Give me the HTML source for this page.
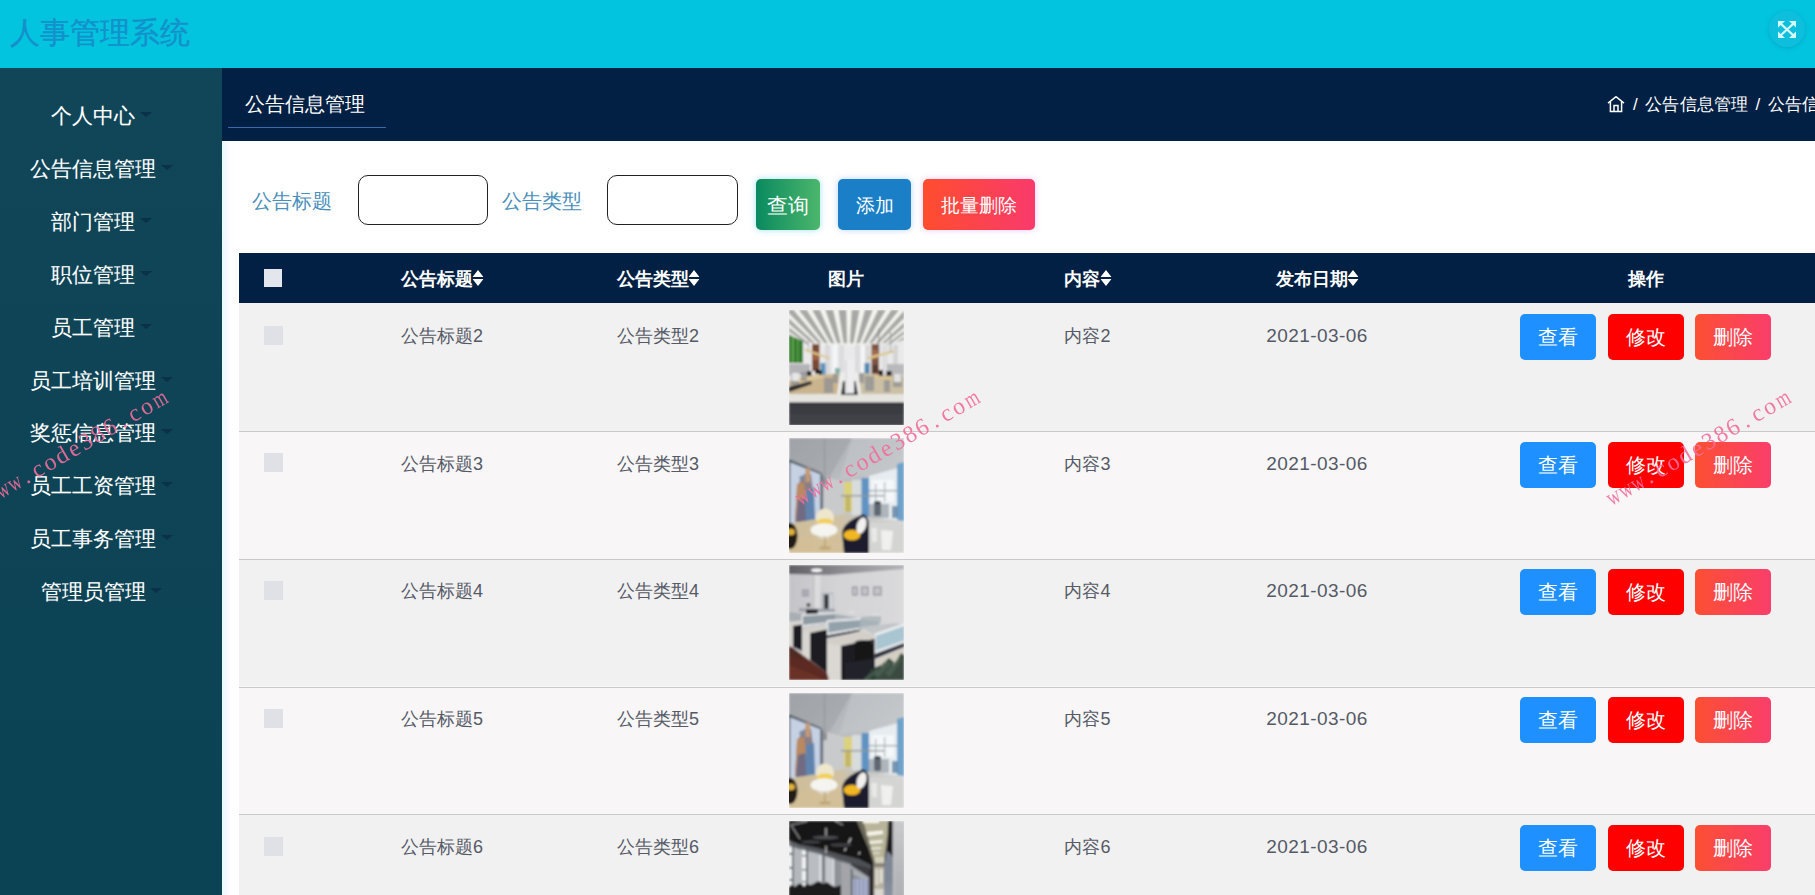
<!DOCTYPE html>
<html lang="zh">
<head>
<meta charset="utf-8">
<title>人事管理系统</title>
<style>
*{box-sizing:border-box;margin:0;padding:0}
html,body{width:1815px;height:895px;overflow:hidden;background:#fff;font-family:"Liberation Sans",sans-serif;}
#app{position:relative;width:1815px;height:895px;overflow:hidden}
.abs{position:absolute}
#top{left:0;top:0;width:1815px;height:68px;background:#03c4de}
#title{left:10px;top:10.5px;font-size:30px;line-height:44px;color:#1391cc;white-space:nowrap;-webkit-text-stroke:.35px #1391cc}
#fs{left:1769px;top:11px;width:36px;height:36px;border-radius:50%;background:#0dbfdd;box-shadow:0 1px 4px rgba(0,120,160,.35)}
#side{left:0;top:68px;width:222px;height:827px;background:linear-gradient(180deg,#104657 0%,#0e4456 40%,#0c4354 100%)}
.mi{left:0;width:186px;padding-left:17px;text-align:center;font-size:20.8px;line-height:30px;height:30px;color:#fff;white-space:nowrap;text-shadow:0 0 1px rgba(255,255,255,.25)}
.mi i{display:inline-block;width:0;height:0;border-left:6px solid transparent;border-right:6px solid transparent;border-top:5.5px solid #0b3049;margin-left:4.5px;vertical-align:6px}
#nav{left:222px;top:68px;width:1593px;height:73px;background:#022043}
#tab{left:244.5px;top:89px;font-size:20.4px;line-height:30px;color:#fff;white-space:nowrap}
#tabline{left:228px;top:127px;width:158px;height:1px;background:#356ba8}
#crumb{left:1633px;top:93px;font-size:17px;line-height:24px;color:#fff;white-space:nowrap;letter-spacing:.2px;word-spacing:2.3px}
#main{left:222px;top:141px;width:1593px;height:754px;background:linear-gradient(90deg,#e6fbff 0,#f6f8ff 4px,#fefeff 9px,#fff 16px)}
.lbl{top:186px;font-size:20px;line-height:30px;color:#4a8fbb;white-space:nowrap}
.inp{top:175px;width:130px;height:50px;border:1.3px solid #222;border-radius:10px;background:#fff}
.btn{color:#fff;text-align:center;white-space:nowrap;border-radius:5px;font-family:"Liberation Serif",serif}
.b1{left:756px;top:179px;width:64px;height:51px;line-height:54px;font-size:21px;background:linear-gradient(90deg,#0a8a5f,#4cb66c);box-shadow:0 0 6px rgba(80,200,230,.55)}
.b2{left:838px;top:179px;width:73px;height:51px;line-height:54px;font-size:18.5px;background:#1a7fc6;box-shadow:0 0 6px rgba(120,170,240,.5)}
.b3{left:923px;top:179px;width:112px;height:51px;line-height:54px;font-size:18.5px;background:linear-gradient(90deg,#ff4d2e,#f93a6c);box-shadow:0 0 6px rgba(220,150,240,.5)}
#thead{left:239px;top:253px;width:1576px;height:50px;background:#022043}
.hcb{left:264px;top:269px;width:18px;height:18px;background:#e4e6ee}
.th{top:253px;height:50px;line-height:52px;font-size:18px;font-weight:bold;color:#fff;white-space:nowrap;transform:translateX(-50%)}
.th svg{vertical-align:-1px}
.row{left:239px;width:1576px;height:128px}
.sep{left:239px;width:1576px;height:1px;background:#c9c9cb}
.r1{background:#f1f1f1}
.r2{background:#f8f6f7}
.td{font-size:18px;line-height:26px;color:#555a66;white-space:nowrap;transform:translateX(-50%)}
.dt{letter-spacing:.45px;font-size:19px}
.cb{left:264px;width:19px;height:19px;background:#e0e0e7}
.img{left:789px;width:115px;height:115px;overflow:hidden}
.img svg{display:block}
.ab{height:46px;width:76px;line-height:46px;font-size:20px;border-radius:5px}
.v{background:#1e90ff}
.e{background:#fe0000}
.d{background:linear-gradient(90deg,#fd4f33,#f93e6b)}
.wm{width:209.3px;height:28px;font-family:"Liberation Serif",serif;font-size:24px;line-height:28px;color:#f26e9b;opacity:.9;white-space:nowrap;transform:rotate(-30deg);font-weight:normal}
.wm b{display:inline-block;width:13.95px;text-align:center;font-weight:normal}
.wm b.n{transform:scaleX(.74)}
</style>
</head>
<body>
<div id="app">
  <div id="top" class="abs"></div>
  <div id="title" class="abs">人事管理系统</div>
  <div id="fs" class="abs"></div>
  <svg class="abs" style="left:1778px;top:20.5px" width="18" height="17" viewBox="0 0 18 17"><g fill="none" stroke="#d6fbff" stroke-width="2.3"><path d="M2.5 2.5L15.5 14.5M15.5 2.5L2.5 14.5"/></g><g fill="#d6fbff"><path d="M0 0h7L0 6.5zM18 0h-7l7 6.5zM0 17h7L0 10.5zM18 17h-7l7-6.5z"/></g></svg>
  <div id="side" class="abs"></div>
  <div id="nav" class="abs"></div>
  <div id="main" class="abs"></div>
  <div class="abs mi" style="top:101px">个人中心<i></i></div>
  <div class="abs mi" style="top:154px">公告信息管理<i></i></div>
  <div class="abs mi" style="top:207px">部门管理<i></i></div>
  <div class="abs mi" style="top:260px">职位管理<i></i></div>
  <div class="abs mi" style="top:313px">员工管理<i></i></div>
  <div class="abs mi" style="top:366px">员工培训管理<i></i></div>
  <div class="abs mi" style="top:418px">奖惩信息管理<i></i></div>
  <div class="abs mi" style="top:471px">员工工资管理<i></i></div>
  <div class="abs mi" style="top:524px">员工事务管理<i></i></div>
  <div class="abs mi" style="top:577px">管理员管理<i></i></div>
  <div id="tab" class="abs">公告信息管理</div>
  <div id="tabline" class="abs"></div>
  <svg class="abs" style="left:1607px;top:94.8px" width="18" height="18" viewBox="0 0 18 18" fill="none" stroke="#fff" stroke-width="1.5"><path d="M1 8.2L9 1.6l8 6.6"/><path d="M3.4 6.8V16.6h11.2V6.8"/><path d="M7 16.6V10.6h4V16.6"/></svg>
  <div id="crumb" class="abs">/ 公告信息管理 / 公告信息管理</div>
  <div class="abs lbl" style="left:252px">公告标题</div>
  <div class="abs inp" style="left:358px"></div>
  <div class="abs lbl" style="left:502px">公告类型</div>
  <div class="abs inp" style="left:607px;width:131px"></div>
  <div class="abs btn b1">查询</div>
  <div class="abs btn b2">添加</div>
  <div class="abs btn b3">批量删除</div>
  <div id="thead" class="abs"></div>
  <div class="abs hcb"></div>
  <div class="abs th" style="left:442px">公告标题<svg width="11" height="16" viewBox="0 0 11 16"><path d="M5.5 0L11 7H0zM5.5 16L11 9H0z" fill="#fff"/></svg></div>
  <div class="abs th" style="left:658px">公告类型<svg width="11" height="16" viewBox="0 0 11 16"><path d="M5.5 0L11 7H0zM5.5 16L11 9H0z" fill="#fff"/></svg></div>
  <div class="abs th" style="left:846px">图片</div>
  <div class="abs th" style="left:1087.5px">内容<svg width="11" height="16" viewBox="0 0 11 16"><path d="M5.5 0L11 7H0zM5.5 16L11 9H0z" fill="#fff"/></svg></div>
  <div class="abs th" style="left:1317px">发布日期<svg width="11" height="16" viewBox="0 0 11 16"><path d="M5.5 0L11 7H0zM5.5 16L11 9H0z" fill="#fff"/></svg></div>
  <div class="abs th" style="left:1645.5px">操作</div>
  <div class="abs row r1" style="top:303px"></div>
  <div class="abs cb" style="top:325.6px"></div>
  <div class="abs td" style="left:442px;top:322.8px">公告标题2</div>
  <div class="abs td" style="left:658px;top:322.8px">公告类型2</div>
  <div class="abs img" style="top:309.9px"><svg width="115" height="115" viewBox="0 0 115 115"><defs><filter id="t1b" x="-5%" y="-5%" width="110%" height="110%"><feGaussianBlur stdDeviation="0.95"/></filter><clipPath id="t1r"><rect width="115" height="115"/></clipPath></defs><g clip-path="url(#t1r)"><g filter="url(#t1b)"><rect width="115" height="115" fill="#e9e9ea"/><polygon points="0,0 115,0 115,30 96,35 19,35 0,25" fill="#a7a7a6"/><clipPath id="t1c"><polygon points="0,0 115,0 115,30 96,35 19,35 0,25"/></clipPath><g clip-path="url(#t1c)"><polygon points="-338.6,0 -333.4,0 59,64" fill="#f6f6f1"/><polygon points="-325.4,0 -320.2,0 59,64" fill="#f6f6f1"/><polygon points="-312.2,0 -307.0,0 59,64" fill="#f6f6f1"/><polygon points="-299.0,0 -293.8,0 59,64" fill="#f6f6f1"/><polygon points="-285.8,0 -280.6,0 59,64" fill="#f6f6f1"/><polygon points="-272.6,0 -267.4,0 59,64" fill="#f6f6f1"/><polygon points="-259.4,0 -254.2,0 59,64" fill="#f6f6f1"/><polygon points="-246.2,0 -241.0,0 59,64" fill="#f6f6f1"/><polygon points="-233.0,0 -227.8,0 59,64" fill="#f6f6f1"/><polygon points="-219.8,0 -214.6,0 59,64" fill="#f6f6f1"/><polygon points="-206.6,0 -201.4,0 59,64" fill="#f6f6f1"/><polygon points="-193.4,0 -188.2,0 59,64" fill="#f6f6f1"/><polygon points="-180.2,0 -175.0,0 59,64" fill="#f6f6f1"/><polygon points="-167.0,0 -161.8,0 59,64" fill="#f6f6f1"/><polygon points="-153.8,0 -148.6,0 59,64" fill="#f6f6f1"/><polygon points="-140.6,0 -135.4,0 59,64" fill="#f6f6f1"/><polygon points="-127.4,0 -122.2,0 59,64" fill="#f6f6f1"/><polygon points="-114.2,0 -109.0,0 59,64" fill="#f6f6f1"/><polygon points="-101.0,0 -95.8,0 59,64" fill="#f6f6f1"/><polygon points="-87.8,0 -82.6,0 59,64" fill="#f6f6f1"/><polygon points="-74.6,0 -69.4,0 59,64" fill="#f6f6f1"/><polygon points="-61.4,0 -56.2,0 59,64" fill="#f6f6f1"/><polygon points="-48.2,0 -43.0,0 59,64" fill="#f6f6f1"/><polygon points="-35.0,0 -29.8,0 59,64" fill="#f6f6f1"/><polygon points="-21.8,0 -16.6,0 59,64" fill="#f6f6f1"/><polygon points="-8.6,0 -3.4,0 59,64" fill="#f6f6f1"/><polygon points="4.6,0 9.8,0 59,64" fill="#f6f6f1"/><polygon points="17.8,0 23.0,0 59,64" fill="#f6f6f1"/><polygon points="31.0,0 36.2,0 59,64" fill="#f6f6f1"/><polygon points="44.2,0 49.4,0 59,64" fill="#f6f6f1"/><polygon points="57.4,0 62.6,0 59,64" fill="#f6f6f1"/><polygon points="70.6,0 75.8,0 59,64" fill="#f6f6f1"/><polygon points="83.8,0 89.0,0 59,64" fill="#f6f6f1"/><polygon points="97.0,0 102.2,0 59,64" fill="#f6f6f1"/><polygon points="110.2,0 115.4,0 59,64" fill="#f6f6f1"/><polygon points="123.4,0 128.6,0 59,64" fill="#f6f6f1"/><polygon points="136.6,0 141.8,0 59,64" fill="#f6f6f1"/><polygon points="149.8,0 155.0,0 59,64" fill="#f6f6f1"/><polygon points="163.0,0 168.2,0 59,64" fill="#f6f6f1"/><polygon points="176.2,0 181.4,0 59,64" fill="#f6f6f1"/><polygon points="189.4,0 194.6,0 59,64" fill="#f6f6f1"/><polygon points="202.6,0 207.8,0 59,64" fill="#f6f6f1"/><polygon points="215.8,0 221.0,0 59,64" fill="#f6f6f1"/><polygon points="229.0,0 234.2,0 59,64" fill="#f6f6f1"/><polygon points="242.2,0 247.4,0 59,64" fill="#f6f6f1"/><polygon points="255.4,0 260.6,0 59,64" fill="#f6f6f1"/><polygon points="268.6,0 273.8,0 59,64" fill="#f6f6f1"/><polygon points="281.8,0 287.0,0 59,64" fill="#f6f6f1"/><polygon points="295.0,0 300.2,0 59,64" fill="#f6f6f1"/><polygon points="308.2,0 313.4,0 59,64" fill="#f6f6f1"/><polygon points="321.4,0 326.6,0 59,64" fill="#f6f6f1"/><polygon points="334.6,0 339.8,0 59,64" fill="#f6f6f1"/><polygon points="347.8,0 353.0,0 59,64" fill="#f6f6f1"/><polygon points="361.0,0 366.2,0 59,64" fill="#f6f6f1"/><polygon points="374.2,0 379.4,0 59,64" fill="#f6f6f1"/><polygon points="387.4,0 392.6,0 59,64" fill="#f6f6f1"/><polygon points="400.6,0 405.8,0 59,64" fill="#f6f6f1"/><polygon points="413.8,0 419.0,0 59,64" fill="#f6f6f1"/><polygon points="427.0,0 432.2,0 59,64" fill="#f6f6f1"/><polygon points="440.2,0 445.4,0 59,64" fill="#f6f6f1"/><polygon points="453.4,0 458.6,0 59,64" fill="#f6f6f1"/></g><rect x="19" y="33" width="77" height="3" fill="#f2f2f0" opacity=".8"/><rect x="36" y="35" width="5" height="42" fill="#d9d9dc"/><rect x="44" y="35" width="4" height="42" fill="#f4f6f8"/><rect x="50" y="35" width="5" height="42" fill="#dcdcdf"/><rect x="66" y="35" width="5" height="42" fill="#dcdcdf"/><rect x="72" y="35" width="4" height="42" fill="#f4f6f8"/><rect x="76" y="35" width="5" height="42" fill="#d9d9dc"/><rect x="93" y="35" width="6" height="42" fill="#dedee0"/><rect x="104" y="35" width="5" height="42" fill="#d4d4d6"/><polygon points="0,25 14,31 14,53 0,53" fill="#2f7a2a"/><rect x="3" y="27" width="1.6" height="26" fill="#6fae58"/><rect x="8" y="29" width="1.6" height="24" fill="#5c9c4a"/><rect x="23" y="34" width="7.5" height="27" fill="#7a4a35"/><rect x="24" y="42" width="5" height="8" fill="#a3623e"/><rect x="82.5" y="34" width="7.5" height="40" fill="#7d5440"/><rect x="83.5" y="40" width="5" height="9" fill="#a86a48"/><rect x="83" y="55" width="6" height="8" fill="#5a3a30"/><rect x="31.5" y="53" width="5" height="12" fill="#5b93bd"/><rect x="75.5" y="53" width="5" height="12" fill="#4f86b0"/><rect x="46" y="58" width="5" height="8" fill="#7fb0a8"/><polygon points="16,38.5 41,47.5 41,49.5 16,41" fill="#dcc88e"/><polygon points="78.5,47 105,40 105,42.5 78.5,49.5" fill="#dcc88e"/><rect x="89.5" y="18" width=".8" height="26" fill="#777"/><rect x="101" y="22" width=".8" height="20" fill="#888"/><rect x="19" y="26" width=".7" height="14" fill="#999"/><rect x="0" y="54" width="21" height="11" fill="#b4b4b8"/><rect x="98" y="54" width="17" height="11" fill="#b9b9bc"/><polygon points="2,70 50,63 50,84 0,84 0,72" fill="#c9b48e"/><polygon points="70,63 115,66 115,84 72,84" fill="#cbbfa4"/><polygon points="10,67 34,64 34,68 10,72" fill="#dcc59a"/><polygon points="80,65 106,67 106,71 80,68" fill="#d9c295"/><rect x="2" y="64" width="8" height="12" fill="#8d8f92" opacity=".75"/><rect x="12" y="62" width="6" height="9" fill="#8d8f92" opacity=".75"/><rect x="35" y="68" width="9" height="15" fill="#8d8f92" opacity=".75"/><rect x="44" y="64" width="5" height="9" fill="#8d8f92" opacity=".75"/><rect x="70" y="63" width="5" height="10" fill="#8d8f92" opacity=".75"/><rect x="76" y="66" width="9" height="15" fill="#8d8f92" opacity=".75"/><rect x="104" y="64" width="9" height="13" fill="#8d8f92" opacity=".75"/><rect x="95" y="70" width="6" height="12" fill="#8d8f92" opacity=".75"/><rect x="3" y="63" width="7" height="8" fill="#e6e6e6"/><rect x="105" y="64" width="7" height="8" fill="#e2e2e2"/><rect x="18" y="61" width="4.5" height="5" fill="#1d1d20"/><rect x="26" y="59" width="4" height="5" fill="#1d1d20"/><rect x="90" y="60" width="4" height="6" fill="#1d1d20"/><rect x="97.5" y="61" width="5" height="5" fill="#1d1d20"/><rect x="30" y="60" width="3" height="5" fill="#1d1d20"/><polygon points="0,77 22,71 23,74 0,82" fill="#26262a"/><rect x="0" y="84" width="115" height="9" fill="#e5e4df"/><polygon points="51,62 69,62 72,84 48,84" fill="#ecece9"/><polygon points="54,71 66.5,71 69,85 52,85" fill="#121214"/><rect x="56" y="50" width="9.2" height="33.5" fill="#ededf0"/><rect x="56" y="50" width="2" height="33.5" fill="#dcdce0"/><rect x="0" y="92.6" width="115" height="23" fill="#3b3a43"/><rect x="0" y="92.6" width="115" height="2" fill="#2c2b33"/><rect x="0" y="104" width="115" height="11" fill="#424149" opacity=".7"/></g></g></svg></div>
  <div class="abs td" style="left:1087.5px;top:322.8px">内容2</div>
  <div class="abs td dt" style="left:1317px;top:322.8px">2021-03-06</div>
  <div class="abs btn ab v" style="left:1520px;top:313.8px">查看</div>
  <div class="abs btn ab e" style="left:1608px;top:313.8px">修改</div>
  <div class="abs btn ab d" style="left:1695px;top:313.8px">删除</div>
  <div class="abs row r2" style="top:430.75px"></div>
  <div class="abs cb" style="top:453.35px"></div>
  <div class="abs td" style="left:442px;top:450.55px">公告标题3</div>
  <div class="abs td" style="left:658px;top:450.55px">公告类型3</div>
  <div class="abs img" style="top:437.65px"><svg width="115" height="115" viewBox="0 0 115 115"><defs><linearGradient id="t2c" x1="0" y1="0" x2="1" y2="1"><stop offset="0" stop-color="#a2a5a9"/><stop offset=".5" stop-color="#bfc2c5"/><stop offset="1" stop-color="#e3e7ea"/></linearGradient><linearGradient id="t2f" x1="0" y1="0" x2="1" y2="0"><stop offset="0" stop-color="#cfbd98"/><stop offset=".45" stop-color="#d0c2a4"/><stop offset=".6" stop-color="#c4c3bf"/><stop offset="1" stop-color="#d8d9d8"/></linearGradient><filter id="t2b" x="-5%" y="-5%" width="110%" height="110%"><feGaussianBlur stdDeviation="0.95"/></filter><clipPath id="t2r"><rect width="115" height="115"/></clipPath></defs><g clip-path="url(#t2r)"><g filter="url(#t2b)"><rect width="115" height="115" fill="url(#t2c)"/><polygon points="0,0 63,0 40,40 0,22" fill="#9da0a5" opacity=".55"/><polygon points="63,0 115,0 115,30 50,42" fill="#c3c6c9" opacity=".6"/><polygon points="34,38 56,44 56,76 34,80" fill="#c9cacb"/><rect x="55" y="44" width="8" height="30" fill="#ddd27c"/><rect x="56.5" y="58" width="5" height="16" fill="#b8a860" opacity=".7"/><rect x="63" y="42" width="10" height="36" fill="#d9dcdd"/><rect x="72.5" y="40" width="8" height="42" fill="#5e93c3"/><polygon points="80,38 109,30 109,82 80,80" fill="#e6ecf0"/><rect x="83" y="42" width="22" height="22" fill="#f4f8fa"/><polygon points="108,26 115,24 115,84 108,82" fill="#6ea2cb"/><rect x="52" y="57" width="44" height="1.4" fill="#8f9698"/><rect x="80" y="52" width="30" height="1.3" fill="#9aa2a6"/><rect x="86" y="46" width="1.2" height="18" fill="#a9b0b4"/><rect x="95" y="44" width="1.2" height="20" fill="#a9b0b4"/><rect x="85" y="63" width="7" height="15" rx="2" fill="#3d444e"/><rect x="80" y="66" width="20" height="14" fill="#7f8890" opacity=".55"/><rect x="103" y="68" width="6" height="12" fill="#5b7fa0" opacity=".8"/><polygon points="0,22 32,36 32,80 0,86" fill="#c6d2e4"/><polygon points="0,21 33,35 33,37 0,24" fill="#5d6770"/><rect x="0" y="22" width="1.2" height="64" fill="#2a2d33"/><rect x="31" y="37" width="3.2" height="42" fill="#69727e"/><path d="M8 50 Q12 38 18 34 L22 36 L24 52 L26 82 L6 84 Z" fill="#8b7f86"/><rect x="16.5" y="30" width="4.5" height="14" fill="#c39a74"/><path d="M8 46 L15 44 L17 60 L12 82 L6 84 Z" fill="#b9895e"/><path d="M17 52 L25 50 L26 82 L16 83 Z" fill="#5f83ad"/><path d="M9 62 L16 60 L17 83 L7 84 Z" fill="#6f6a82"/><circle cx="13" cy="40" r="2.6" fill="#7d8aa0"/><rect x="35.3" y="0" width=".8" height="39" fill="#8b8f92"/><ellipse cx="35.8" cy="43" rx="2.3" ry="4.5" fill="#8f9294"/><polygon points="0,86 33,80 56,76 80,79 115,83 115,115 0,115" fill="url(#t2f)"/><polygon points="78,84 115,86 115,115 80,115" fill="#d4d5d3"/><polygon points="92,92 104,93 102,112 93,112" fill="#f3f3f1" opacity=".9"/><polygon points="82,90 88,90 88,104 83,104" fill="#ecedeb" opacity=".8"/><polygon points="0,100 50,96 55,115 0,115" fill="#d3bf96" opacity=".8"/><ellipse cx="1" cy="98" rx="7.5" ry="13" fill="#221d18"/><ellipse cx="1.5" cy="94" rx="4.5" ry="3.2" fill="#e0b13a"/><ellipse cx="36" cy="80" rx="9" ry="9.5" fill="#efe7cd"/><ellipse cx="36" cy="84" rx="8" ry="3.6" fill="#f1cf55"/><ellipse cx="35" cy="92" rx="13.5" ry="6.8" fill="#f6f4f0"/><path d="M26 96 Q35 102 44 96 L40 100 Q35 103 30 100 Z" fill="#ddd6c6"/><rect x="35.2" y="99" width="1.3" height="10" fill="#b9a06e"/><ellipse cx="36" cy="110" rx="6" ry="1.6" fill="#b49a68" opacity=".7"/><path d="M53 95 Q54 86 66 80 L74 76 Q80 78 80 88 L80 115 L55 115 Z" fill="#1b1b2e"/><ellipse cx="63" cy="97" rx="8.5" ry="5.2" fill="#f0b722"/><ellipse cx="72.5" cy="87.5" rx="4.6" ry="8.5" transform="rotate(18 72.5 87.5)" fill="#f2f1ee"/></g></g></svg></div>
  <div class="abs td" style="left:1087.5px;top:450.55px">内容3</div>
  <div class="abs td dt" style="left:1317px;top:450.55px">2021-03-06</div>
  <div class="abs btn ab v" style="left:1520px;top:441.55px">查看</div>
  <div class="abs btn ab e" style="left:1608px;top:441.55px">修改</div>
  <div class="abs btn ab d" style="left:1695px;top:441.55px">删除</div>
  <div class="abs row r1" style="top:558.5px"></div>
  <div class="abs cb" style="top:581.1px"></div>
  <div class="abs td" style="left:442px;top:578.3px">公告标题4</div>
  <div class="abs td" style="left:658px;top:578.3px">公告类型4</div>
  <div class="abs img" style="top:565.4px"><svg width="115" height="115" viewBox="0 0 115 115"><defs><linearGradient id="t3c" x1="0" y1="0" x2="1" y2="0"><stop offset="0" stop-color="#5f5f64"/><stop offset=".45" stop-color="#8b8b90"/><stop offset="1" stop-color="#b4b4b8"/></linearGradient><linearGradient id="t3w" x1="0" y1="0" x2="1" y2="0"><stop offset="0" stop-color="#c4c4c8"/><stop offset=".4" stop-color="#d3d3d6"/><stop offset="1" stop-color="#dadadc"/></linearGradient><filter id="t3b" x="-5%" y="-5%" width="110%" height="110%"><feGaussianBlur stdDeviation="0.95"/></filter><clipPath id="t3r"><rect width="115" height="115"/></clipPath></defs><g clip-path="url(#t3r)"><g filter="url(#t3b)"><rect width="115" height="115" fill="url(#t3w)"/><polygon points="0,0 115,0 115,4 40,10 0,9" fill="url(#t3c)"/><ellipse cx="27.6" cy="5.3" rx="5.5" ry="1.7" fill="#fafafa"/><rect x="25" y="10" width="6.5" height="36" fill="#dcdcde"/><rect x="24.3" y="10" width="1" height="36" fill="#b8b8bc"/><rect x="12.7" y="24" width="7.5" height="8" fill="#a9a9b2"/><rect x="32" y="27.6" width="12.5" height="17" fill="#b7bbc0"/><rect x="35" y="29.5" width="4.6" height="15" fill="#383a42"/><rect x="40.3" y="29.5" width="3.2" height="15" fill="#d2d4d8"/><rect x="63" y="21.5" width="5.6" height="9" fill="#8e8e97"/><rect x="64.1" y="22.7" width="3.3999999999999995" height="6.6" fill="#c3c3c8"/><rect x="72" y="21.5" width="7.6" height="9" fill="#8e8e97"/><rect x="73.1" y="22.7" width="5.3999999999999995" height="6.6" fill="#c3c3c8"/><rect x="84" y="21.5" width="8.6" height="9" fill="#8e8e97"/><rect x="85.1" y="22.7" width="6.3999999999999995" height="6.6" fill="#c3c3c8"/><ellipse cx="19.5" cy="40" rx="2.2" ry="2" fill="#4b4f50"/><polygon points="10,43 46,44 46,47 10,46.5" fill="#9ea1a6"/><rect x="17" y="44.5" width="12" height="5.5" fill="#24252b"/><polygon points="0,47 14,49 14,57 0,56" fill="#a8aeb4"/><polygon points="46,49 70,53 70,58 46,55" fill="#a9b0b6"/><polygon points="72,52 92,50 92,58 72,58" fill="#b3bbc0"/><rect x="59" y="46.5" width="7" height="1.2" fill="#e6e6e8"/><rect x="83" y="49.5" width="8.5" height="1.3" fill="#e6e6e8"/><polygon points="13,50 46,48 46,58 13,61.5" fill="#8f9aa2"/><polygon points="13,49.5 46,47.2 46,49 13,51.3" fill="#e2e4e6"/><rect x="12.5" y="50" width="1.5" height="12" fill="#e2e4e6"/><polygon points="13,60 38,57 38,58.6 13,62" fill="#dfe1e3"/><polygon points="38,56 71,54 71,65 38,71" fill="#93a2aa"/><polygon points="38,55 71,53 71,55 38,57.2" fill="#e6e8ea"/><rect x="37.5" y="55.5" width="1.8" height="16" fill="#e6e8ea"/><polygon points="38,68 71,62.5 71,64.5 38,70.5" fill="#e4e6e8"/><polygon points="38,70.5 71,64.5 71,66.5 38,73" fill="#2a2c35"/><polygon points="71,54 90,57 90,62 71,64.5" fill="#a5b2b8"/><polygon points="71,62 106,58 115,60 115,66 86,70" fill="#c2c6c8"/><polygon points="85.6,70 115,60 115,79 85.6,90" fill="#a9c5d2"/><polygon points="85.6,68.5 115,58.5 115,61 85.6,71.3" fill="#eef0f2"/><rect x="85" y="69" width="2" height="24" fill="#e4e6e8"/><polygon points="85.6,86 115,75.5 115,78 85.6,89" fill="#e9ecee"/><polygon points="85.6,89 115,78 115,82 85.6,94" fill="#2b2d38"/><polygon points="0,57 13,55.5 13,59 0,61" fill="#d8d6d1"/><polygon points="14,64 38,60.5 38,64 21,68 14,67" fill="#d4d1cb"/><polygon points="38,75 71,66 85.6,70 85.6,74 52,81 38,79" fill="#d3cfc8"/><polygon points="4,61 13,59.5 13,86 4,82" fill="#1a1a20"/><polygon points="21,68 38,64.5 38,108 21,95" fill="#1b1b21"/><polygon points="52,81 85.6,74 85.6,115 52,115" fill="#1a1a20"/><ellipse cx="75" cy="77.5" rx="9.5" ry="2.4" fill="#6a6c74"/><ellipse cx="75" cy="77" rx="8.5" ry="1.7" fill="#15151a"/><rect x="66" y="78" width="19" height="22" fill="#121217"/><polygon points="56,98 86,93 86,115 56,115" fill="#24242a"/><polygon points="0,60 4,60.5 4,83 0,81" fill="#d6d3ce"/><polygon points="13.5,66.5 21,68 21,95.5 13.5,90" fill="#d9d6d1"/><polygon points="38,78.5 52,81 52,115 38,115" fill="#dbd8d3"/><polygon points="0,81 4,83 13.5,90 21,95.5 38,108 40,115 0,115" fill="#5c2b22"/><polygon points="0,100 30,112 32,115 0,115" fill="#6e3428" opacity=".8"/><polygon points="0,81 12,89 12,96 0,90" fill="#4e2920" opacity=".8"/><polygon points="87,95 115,83 115,100 88,108" fill="#d4cfc3"/><polygon points="76,115 82,104 92,100 100,93 106,98 112,88 115,90 115,115" fill="#2d3e33" opacity=".92"/><path d="M84 110 L100 96 L103 98 L90 112 Z M96 108 L110 92 L113 94 L101 112 Z M74 114 L88 104 L90 107 L78 115 Z" fill="#4c6454" opacity=".7"/><path d="M92 102 L98 96 M104 100 L109 93" stroke="#c9cfc6" stroke-width="1" opacity=".6"/></g></g></svg></div>
  <div class="abs td" style="left:1087.5px;top:578.3px">内容4</div>
  <div class="abs td dt" style="left:1317px;top:578.3px">2021-03-06</div>
  <div class="abs btn ab v" style="left:1520px;top:569.3px">查看</div>
  <div class="abs btn ab e" style="left:1608px;top:569.3px">修改</div>
  <div class="abs btn ab d" style="left:1695px;top:569.3px">删除</div>
  <div class="abs row r2" style="top:686.25px"></div>
  <div class="abs cb" style="top:708.85px"></div>
  <div class="abs td" style="left:442px;top:706.05px">公告标题5</div>
  <div class="abs td" style="left:658px;top:706.05px">公告类型5</div>
  <div class="abs img" style="top:693.15px"><svg width="115" height="115" viewBox="0 0 115 115"><defs><linearGradient id="t4c" x1="0" y1="0" x2="1" y2="1"><stop offset="0" stop-color="#a2a5a9"/><stop offset=".5" stop-color="#bfc2c5"/><stop offset="1" stop-color="#e3e7ea"/></linearGradient><linearGradient id="t4f" x1="0" y1="0" x2="1" y2="0"><stop offset="0" stop-color="#cfbd98"/><stop offset=".45" stop-color="#d0c2a4"/><stop offset=".6" stop-color="#c4c3bf"/><stop offset="1" stop-color="#d8d9d8"/></linearGradient><filter id="t4b" x="-5%" y="-5%" width="110%" height="110%"><feGaussianBlur stdDeviation="0.95"/></filter><clipPath id="t4r"><rect width="115" height="115"/></clipPath></defs><g clip-path="url(#t4r)"><g filter="url(#t4b)"><rect width="115" height="115" fill="url(#t4c)"/><polygon points="0,0 63,0 40,40 0,22" fill="#9da0a5" opacity=".55"/><polygon points="63,0 115,0 115,30 50,42" fill="#c3c6c9" opacity=".6"/><polygon points="34,38 56,44 56,76 34,80" fill="#c9cacb"/><rect x="55" y="44" width="8" height="30" fill="#ddd27c"/><rect x="56.5" y="58" width="5" height="16" fill="#b8a860" opacity=".7"/><rect x="63" y="42" width="10" height="36" fill="#d9dcdd"/><rect x="72.5" y="40" width="8" height="42" fill="#5e93c3"/><polygon points="80,38 109,30 109,82 80,80" fill="#e6ecf0"/><rect x="83" y="42" width="22" height="22" fill="#f4f8fa"/><polygon points="108,26 115,24 115,84 108,82" fill="#6ea2cb"/><rect x="52" y="57" width="44" height="1.4" fill="#8f9698"/><rect x="80" y="52" width="30" height="1.3" fill="#9aa2a6"/><rect x="86" y="46" width="1.2" height="18" fill="#a9b0b4"/><rect x="95" y="44" width="1.2" height="20" fill="#a9b0b4"/><rect x="85" y="63" width="7" height="15" rx="2" fill="#3d444e"/><rect x="80" y="66" width="20" height="14" fill="#7f8890" opacity=".55"/><rect x="103" y="68" width="6" height="12" fill="#5b7fa0" opacity=".8"/><polygon points="0,22 32,36 32,80 0,86" fill="#c6d2e4"/><polygon points="0,21 33,35 33,37 0,24" fill="#5d6770"/><rect x="0" y="22" width="1.2" height="64" fill="#2a2d33"/><rect x="31" y="37" width="3.2" height="42" fill="#69727e"/><path d="M8 50 Q12 38 18 34 L22 36 L24 52 L26 82 L6 84 Z" fill="#8b7f86"/><rect x="16.5" y="30" width="4.5" height="14" fill="#c39a74"/><path d="M8 46 L15 44 L17 60 L12 82 L6 84 Z" fill="#b9895e"/><path d="M17 52 L25 50 L26 82 L16 83 Z" fill="#5f83ad"/><path d="M9 62 L16 60 L17 83 L7 84 Z" fill="#6f6a82"/><circle cx="13" cy="40" r="2.6" fill="#7d8aa0"/><rect x="35.3" y="0" width=".8" height="39" fill="#8b8f92"/><ellipse cx="35.8" cy="43" rx="2.3" ry="4.5" fill="#8f9294"/><polygon points="0,86 33,80 56,76 80,79 115,83 115,115 0,115" fill="url(#t4f)"/><polygon points="78,84 115,86 115,115 80,115" fill="#d4d5d3"/><polygon points="92,92 104,93 102,112 93,112" fill="#f3f3f1" opacity=".9"/><polygon points="82,90 88,90 88,104 83,104" fill="#ecedeb" opacity=".8"/><polygon points="0,100 50,96 55,115 0,115" fill="#d3bf96" opacity=".8"/><ellipse cx="1" cy="98" rx="7.5" ry="13" fill="#221d18"/><ellipse cx="1.5" cy="94" rx="4.5" ry="3.2" fill="#e0b13a"/><ellipse cx="36" cy="80" rx="9" ry="9.5" fill="#efe7cd"/><ellipse cx="36" cy="84" rx="8" ry="3.6" fill="#f1cf55"/><ellipse cx="35" cy="92" rx="13.5" ry="6.8" fill="#f6f4f0"/><path d="M26 96 Q35 102 44 96 L40 100 Q35 103 30 100 Z" fill="#ddd6c6"/><rect x="35.2" y="99" width="1.3" height="10" fill="#b9a06e"/><ellipse cx="36" cy="110" rx="6" ry="1.6" fill="#b49a68" opacity=".7"/><path d="M53 95 Q54 86 66 80 L74 76 Q80 78 80 88 L80 115 L55 115 Z" fill="#1b1b2e"/><ellipse cx="63" cy="97" rx="8.5" ry="5.2" fill="#f0b722"/><ellipse cx="72.5" cy="87.5" rx="4.6" ry="8.5" transform="rotate(18 72.5 87.5)" fill="#f2f1ee"/></g></g></svg></div>
  <div class="abs td" style="left:1087.5px;top:706.05px">内容5</div>
  <div class="abs td dt" style="left:1317px;top:706.05px">2021-03-06</div>
  <div class="abs btn ab v" style="left:1520px;top:697.05px">查看</div>
  <div class="abs btn ab e" style="left:1608px;top:697.05px">修改</div>
  <div class="abs btn ab d" style="left:1695px;top:697.05px">删除</div>
  <div class="abs row r1" style="top:814px"></div>
  <div class="abs cb" style="top:836.6px"></div>
  <div class="abs td" style="left:442px;top:833.8px">公告标题6</div>
  <div class="abs td" style="left:658px;top:833.8px">公告类型6</div>
  <div class="abs img" style="top:820.9px"><svg width="115" height="115" viewBox="0 0 115 115"><defs><linearGradient id="t5g" x1="0" y1="0" x2="0" y2="1"><stop offset="0" stop-color="#c9cacb"/><stop offset=".5" stop-color="#b3b5b8"/><stop offset="1" stop-color="#a9abae"/></linearGradient><linearGradient id="t5k" x1="0" y1="0" x2="0" y2="1"><stop offset="0" stop-color="#17171a"/><stop offset=".75" stop-color="#2a2b33"/><stop offset="1" stop-color="#8b93a6"/></linearGradient><filter id="t5b" x="-5%" y="-5%" width="110%" height="110%"><feGaussianBlur stdDeviation="0.95"/></filter><clipPath id="t5r"><rect width="115" height="115"/></clipPath></defs><g clip-path="url(#t5r)"><g filter="url(#t5b)"><rect width="115" height="115" fill="#9a9ea3"/><rect x="0" y="18" width="50" height="60" fill="#a9adb1"/><rect x="0" y="20" width="3" height="52" fill="#f2f4f6"/><rect x="3" y="20" width="1.6" height="52" fill="#4a4d52"/><rect x="4.6" y="22" width="8.5" height="52" fill="#b4b8bc"/><rect x="13" y="26" width="4" height="46" fill="#eef0f3"/><rect x="17" y="26" width="2" height="46" fill="#6d7176"/><rect x="19" y="30" width="12" height="44" fill="#b9bcc0"/><rect x="30.5" y="34" width="1.8" height="36" fill="#e8eaee"/><rect x="33" y="32" width="3" height="40" fill="#7e8287"/><rect x="36.5" y="33" width="6.5" height="42" fill="#c4c7ca"/><rect x="43.5" y="36" width="1.6" height="36" fill="#e3e6ea"/><rect x="45.5" y="36" width="6" height="40" fill="#8e9297"/><rect x="0" y="32" width="3.2" height="1.6" fill="#555"/><rect x="13" y="34" width="4" height="1.4" fill="#777"/><rect x="0" y="46" width="3.2" height="1.6" fill="#555"/><rect x="13" y="48" width="4" height="1.4" fill="#777"/><rect x="0" y="58" width="3.2" height="1.6" fill="#555"/><rect x="13" y="60" width="4" height="1.4" fill="#777"/><rect x="53" y="34" width="8.5" height="44" fill="#a3a5a9"/><polygon points="61.5,42 80,54 80,78 61.5,78" fill="#8d9197"/><polygon points="62,46 79,57 79,61 62,52" fill="#a9adb3"/><rect x="63.5" y="58" width="16" height="20" fill="#aab2d2"/><rect x="62" y="48" width="1.6" height="30" fill="#5d6066"/><rect x="66" y="58" width="1" height="20" fill="#7a7f92"/><rect x="70" y="58" width="1" height="20" fill="#7a7f92"/><rect x="74" y="58" width="1" height="20" fill="#7a7f92"/><rect x="78" y="58" width="1" height="20" fill="#7a7f92"/><polygon points="0,0 69,0 74,14 80,28 84.5,42 84.5,52 70,44 50,38 30,30 10,25 0,20" fill="#191718"/><polygon points="0,19 10,23 30,27 50,33 70,38 82,44 82,50 70,46 50,40 30,33 10,28 0,25" fill="#585c60" opacity=".85"/><polygon points="62,42 84,48 84.5,62 80,56 62,44" fill="#3a3b40"/><polygon points="80,50 85,46 85,78 80,78" fill="#2e2c2d"/><path d="M2 4 L18 0.5 M2 4 L11 18 M46 0 L54 4" stroke="#9a9c9e" stroke-width="1.1" fill="none"/><path d="M37 7 V15 M37 25 V32 M62 17 L59.5 22 M57 27 L55.5 30 M71 31 L69.5 33.5" stroke="#cfd1d3" stroke-width="1.2" fill="none"/><ellipse cx="36.5" cy="16.5" rx="13" ry="1.8" fill="#4a4c50"/><ellipse cx="52" cy="24" rx="11" ry="1.6" fill="#3f4145"/><ellipse cx="22" cy="21" rx="10" ry="1.4" fill="#414347"/><polygon points="68,0 100,0 99,20 95,42 84.5,42 80,28 74,14" fill="#87856f"/><polygon points="74,0 99,0 98,14 94,42 86,42 80,20" fill="#b7b49a"/><polygon points="68,0 74,0 80,20 86,42 84.5,42 80,28 74,14" fill="#6d6b5a"/><rect x="74" y="-1" width="16" height="3.2" fill="#f6f4e8"/><polygon points="77.5,11 94,9.5 94,13 78.5,15" fill="#f7f5ea"/><polygon points="80,20 93.5,19 93.5,21.8 81,23" fill="#f1efe2"/><polygon points="82,26.5 92,26 92,28 82.5,28.8" fill="#e9e7d8"/><polygon points="83.5,31.5 91,31.2 91,32.8 84,33.2" fill="#dfdccb"/><rect x="86" y="36" width="9" height="6" fill="#d3cfba"/><rect x="85" y="42" width="10" height="4" fill="#8a8478"/><rect x="85" y="46" width="10" height="32" fill="#b7b0a2"/><rect x="86.5" y="48" width="3" height="16" fill="#dcd8cc"/><rect x="91" y="48" width="2.5" height="14" fill="#e6e3da"/><rect x="85.5" y="68" width="9" height="10" fill="#d9d7cf"/><polygon points="100,0 104,0 104,78 95,78 95,46 98.5,20" fill="url(#t5k)"/><polygon points="95,46 98,30 103.7,34 103.7,78 95,78" fill="#8a92a3" opacity=".9"/><polygon points="99.5,0 104,0 104,36 98.6,30" fill="#19191c"/><rect x="103.7" y="0" width="12" height="115" fill="url(#t5g)"/><rect x="103.7" y="0" width="2" height="115" fill="#bfc1c3" opacity=".7"/><path d="M0 66 Q3 62 6 66 L8 64 Q12 60 15 66 L17 63 L22 64 L26 62 Q30 58 34 63 L38 61 L42 64 L46 66 L52 64 L52 80 L0 80 Z" fill="#1b1b1f"/></g></g></svg></div>
  <div class="abs td" style="left:1087.5px;top:833.8px">内容6</div>
  <div class="abs td dt" style="left:1317px;top:833.8px">2021-03-06</div>
  <div class="abs btn ab v" style="left:1520px;top:824.8px">查看</div>
  <div class="abs btn ab e" style="left:1608px;top:824.8px">修改</div>
  <div class="abs btn ab d" style="left:1695px;top:824.8px">删除</div>
  <div class="abs sep" style="top:431.00px"></div>
  <div class="abs sep" style="top:558.75px"></div>
  <div class="abs sep" style="top:686.50px"></div>
  <div class="abs sep" style="top:814.25px"></div>
  <div class="abs wm" style="left:-30.8px;top:433.6px"><b class="n">w</b><b class="n">w</b><b class="n">w</b><b class="">.</b><b class="">c</b><b class="">o</b><b class="">d</b><b class="">e</b><b class="">3</b><b class="">8</b><b class="">6</b><b class="">.</b><b class="">c</b><b class="">o</b><b class="n">m</b></div>
  <div class="abs wm" style="left:780.8px;top:433.6px"><b class="n">w</b><b class="n">w</b><b class="n">w</b><b class="">.</b><b class="">c</b><b class="">o</b><b class="">d</b><b class="">e</b><b class="">3</b><b class="">8</b><b class="">6</b><b class="">.</b><b class="">c</b><b class="">o</b><b class="n">m</b></div>
  <div class="abs wm" style="left:1592.4px;top:434.1px"><b class="n">w</b><b class="n">w</b><b class="n">w</b><b class="">.</b><b class="">c</b><b class="">o</b><b class="">d</b><b class="">e</b><b class="">3</b><b class="">8</b><b class="">6</b><b class="">.</b><b class="">c</b><b class="">o</b><b class="n">m</b></div>
</div>
</body>
</html>
